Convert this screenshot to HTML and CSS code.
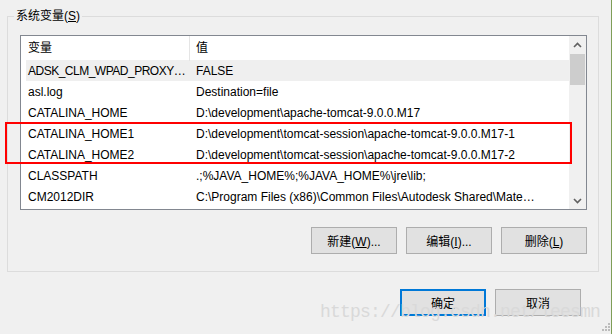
FILE: index.html
```html
<!DOCTYPE html>
<html>
<head>
<meta charset="utf-8">
<title>环境变量</title>
<link rel="stylesheet" href="styles.css">
</head>
<body>
<div class="window">
  <fieldset class="group">
    <legend>系统变量(<u>S</u>)</legend>

    <div class="listbox">
      <div class="list">
        <div class="list-head">
          <div class="head-cell">变量</div>
          <div class="head-cell divided">值</div>
        </div>
        <div class="row selected"><div class="name tight">ADSK_CLM_WPAD_PROXY…</div><div class="value">FALSE</div></div>
        <div class="row"><div class="name">asl.log</div><div class="value">Destination=file</div></div>
        <div class="row"><div class="name">CATALINA_HOME</div><div class="value">D:\development\apache-tomcat-9.0.0.M17</div></div>
        <div class="row"><div class="name">CATALINA_HOME1</div><div class="value">D:\development\tomcat-session\apache-tomcat-9.0.0.M17-1</div></div>
        <div class="row"><div class="name">CATALINA_HOME2</div><div class="value">D:\development\tomcat-session\apache-tomcat-9.0.0.M17-2</div></div>
        <div class="row"><div class="name">CLASSPATH</div><div class="value">.;%JAVA_HOME%;%JAVA_HOME%\jre\lib;</div></div>
        <div class="row"><div class="name">CM2012DIR</div><div class="value">C:\Program Files (x86)\Common Files\Autodesk Shared\Mate…</div></div>
      </div>
      <div class="scrollbar">
        <div class="arrow">
          <svg width="9" height="6" viewBox="0 0 9 6"><path d="M1 5 L4.5 1.5 L8 5" fill="none" stroke="#606060" stroke-width="1.6"/></svg>
        </div>
        <div class="thumb"></div>
        <div class="track"></div>
        <div class="arrow">
          <svg width="9" height="6" viewBox="0 0 9 6"><path d="M1 1 L4.5 4.5 L8 1" fill="none" stroke="#606060" stroke-width="1.6"/></svg>
        </div>
      </div>
    </div>

    <div class="actions">
      <button class="btn">新建(<u>W</u>)...</button>
      <button class="btn">编辑(<u>I</u>)...</button>
      <button class="btn">删除(<u>L</u>)</button>
    </div>
  </fieldset>

  <div class="footer">
    <button class="btn default">确定</button>
    <button class="btn">取消</button>
  </div>

  <!-- highlight drawn over the two tomcat rows -->
  <div class="mark"></div>
  <div class="watermark">https://blog.csdn.net/leesmn</div>
  <svg class="grip" width="12" height="12" viewBox="0 0 12 12">
    <rect x="9" y="1" width="2" height="2" fill="#bcbcbc"/>
    <rect x="6" y="4" width="2" height="2" fill="#bcbcbc"/>
    <rect x="9" y="4" width="2" height="2" fill="#bcbcbc"/>
    <rect x="3" y="7" width="2" height="2" fill="#bcbcbc"/>
    <rect x="6" y="7" width="2" height="2" fill="#bcbcbc"/>
    <rect x="9" y="7" width="2" height="2" fill="#bcbcbc"/>
  </svg>
</div>
</body>
</html>
```

FILE: styles.css
```css
body {
  margin: 0;
  background-color: #f0f0f0;
  font-family: "Liberation Sans", "Noto Sans CJK SC", sans-serif;
  font-size: 12px;
  color: #000;
}

.window {
  position: relative;
  width: 611px;
  height: 334px;
  border-right: 1px solid #7f9d57;
  overflow: hidden;
}

.group {
  box-sizing: border-box;
  width: 592px;
  height: 264px;
  margin: 8px 0 0 7px;
  padding: 0;
  border: 1px solid #dcdcdc;
}

.group legend {
  margin-left: 6px;
  padding: 0 2px;
  line-height: 16px;
}

.listbox {
  display: flex;
  width: 567px;
  height: 175px;
  box-sizing: border-box;
  margin: 11px 0 0 12px;
  border: 1px solid #828790;
  background-color: #fff;
}

.list {
  flex: 1;
  overflow: hidden;
}

.list-head {
  display: grid;
  grid-template-columns: 168px 1fr;
  height: 24px;
  line-height: 25px;
}

.head-cell {
  padding-left: 7px;
  white-space: nowrap;
}

.head-cell.divided {
  padding-left: 6px;
  border-left: 1px solid #e5e5e5;
}

.row {
  display: grid;
  grid-template-columns: 163px 1fr;
  height: 21px;
  line-height: 22px;
  margin-left: 5px;
  white-space: nowrap;
}

.row.selected {
  background-color: #efefef;
}

.name {
  padding-left: 2px;
  overflow: hidden;
}

.name.tight {
  letter-spacing: -0.5px;
}

.value {
  padding-left: 7px;
  overflow: hidden;
}

.scrollbar {
  width: 17px;
  display: flex;
  flex-direction: column;
  background-color: #f0f0f0;
}

.arrow {
  height: 17px;
  display: flex;
  align-items: center;
  justify-content: center;
}

.thumb {
  height: 31px;
  margin: 1px 1px 0;
  background-color: #cdcdcd;
}

.track {
  flex: 1;
}

.actions {
  display: flex;
  justify-content: flex-end;
  gap: 9px;
  margin: 17px 11px 0 0;
}

.btn {
  box-sizing: border-box;
  width: 86px;
  height: 27px;
  padding: 0;
  border: 1px solid #adadad;
  background-color: #e1e1e1;
  font-family: "Liberation Sans", "Noto Sans CJK SC", sans-serif;
  font-size: 12px;
  color: #000;
}

.btn.default {
  border: 2px solid #0078d7;
}

.footer {
  display: flex;
  justify-content: flex-end;
  gap: 9px;
  margin: 17px 30px 0 0;
}

.mark {
  position: absolute;
  left: 5px;
  top: 122px;
  width: 563px;
  height: 38px;
  border: 2px solid #ff0000;
}

.watermark {
  position: absolute;
  left: 320px;
  top: 302px;
  font-family: "Liberation Mono", monospace;
  font-size: 18px;
  letter-spacing: -0.8px;
  color: #d9d9d9;
  white-space: nowrap;
}

.grip {
  position: absolute;
  right: 0;
  bottom: 0;
}
```
